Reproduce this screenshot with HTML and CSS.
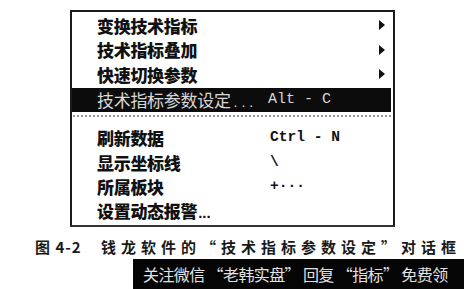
FILE: index.html
```html
<!DOCTYPE html>
<html lang="zh">
<head>
<meta charset="utf-8">
<link rel="stylesheet" href="styles.css">
</head>
<body>
<div class="page">
  <div class="menu">
    <div class="group">
      <div class="row"><span class="label">变换技术指标</span><span class="key"></span><span class="arrow"></span></div>
      <div class="row"><span class="label">技术指标叠加</span><span class="key"></span><span class="arrow"></span></div>
      <div class="row"><span class="label">快速切换参数</span><span class="key"></span><span class="arrow"></span></div>
      <div class="row active"><span class="label">技术指标参数设定<span class="dots">. . .</span></span><span class="key">Alt - C</span><span></span></div>
    </div>
    <div class="sep"></div>
    <div class="group lower">
      <div class="row"><span class="label">刷新数据</span><span class="key">Ctrl - N</span><span></span></div>
      <div class="row"><span class="label">显示坐标线</span><span class="key">\</span><span></span></div>
      <div class="row"><span class="label">所属板块</span><span class="key">+···</span><span></span></div>
      <div class="row"><span class="label">设置动态报警<span class="dots">...</span></span><span class="key"></span><span></span></div>
    </div>
  </div>
  <div class="caption"><span class="fig">图 4-2</span><span class="ctext">钱龙软件的“技术指标参数设定”对话框</span></div>
  <div class="banner">关注微信 “老韩实盘” 回复 “指标” 免费领</div>
</div>
</body>
</html>
```
FILE: styles.css
```css
html, body {
  margin: 0;
  padding: 0;
  background: #fff;
}
.page {
  width: 464px;
  height: 289px;
  overflow: hidden;
  display: flex;
  flex-direction: column;
  font-family: "Noto Sans CJK SC", "Liberation Sans", sans-serif;
  color: #111;
}
.menu {
  margin: 10px 0 0 70px;
  width: 321px;
  border: 2px solid #1a1a1a;
  border-bottom-color: #333;
  padding: 1px 0 0 0;
  height: 212px;
  box-sizing: content-box;
}
.group {
  display: flex;
  flex-direction: column;
}
.row {
  display: grid;
  grid-template-columns: 173px 1fr 7px;
  align-items: center;
  height: 24.5px;
  padding: 0 8px 0 25px;
  font-size: 17px;
  font-weight: 900;
  line-height: 1;
}
.label {
  white-space: nowrap;
  letter-spacing: -0.3px;
}
.dots {
  letter-spacing: 0;
  margin-left: 1px;
  font-family: "Liberation Sans", sans-serif;
  font-size: 15px;
  font-weight: 700;
}
.key {
  font-family: "Liberation Mono", monospace;
  font-size: 14.6px;
  font-weight: 700;
  white-space: pre;
}
.arrow {
  width: 0;
  height: 0;
  margin-left: 1px;
  border-left: 6px solid #111;
  border-top: 5px solid transparent;
  border-bottom: 5px solid transparent;
}
.row.active {
  background: #0c0c0c;
  color: #d8d8d8;
  font-weight: 400;
  height: 24px;
  margin: 0 2px 0 0;
  margin-top: 1px;
}
.row.active .key {
  font-weight: 400;
  font-size: 15px;
  margin-left: -2px;
}
.row.active .dots {
  margin-left: 3px;
  font-size: 14px;
  font-weight: 400;
}
.sep {
  margin: 3px 2px 0 1px;
  border-top: 2px dotted #999;
}
.lower {
  padding-top: 9px;
}
.caption {
  display: flex;
  align-items: center;
  margin: 10px 0 0 35px;
  height: 18px;
  font-size: 15px;
  font-weight: 700;
  color: #1a1a1a;
  white-space: nowrap;
}
.fig {
  width: 66px;
  letter-spacing: 1px;
}
.ctext {
  letter-spacing: 5px;
}
.banner {
  margin: 4px 0 0 133px;
  flex: 1;
  background: #050505;
  color: #e2e2e2;
  font-size: 16px;
  letter-spacing: -0.6px;
  padding-left: 10px;
  display: flex;
  align-items: center;
  white-space: nowrap;
}
```
